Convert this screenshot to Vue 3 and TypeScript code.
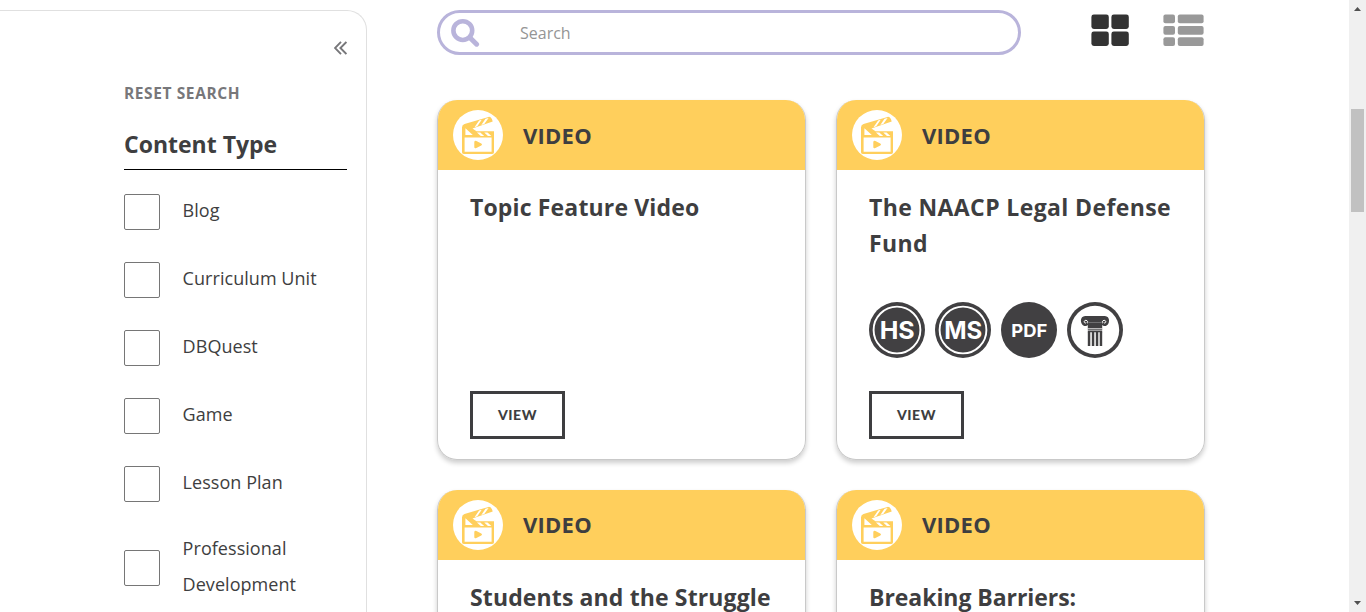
<script setup lang="ts">
interface Card {
  title: string
  tracking: number
  badges: string[]
}

const filters: string[] = [
  'Blog',
  'Curriculum Unit',
  'DBQuest',
  'Game',
  'Lesson Plan',
  'Professional Development',
]

const cards: Card[] = [
  { title: 'Topic Feature Video', tracking: 0.15, badges: [] },
  { title: 'The NAACP Legal Defense Fund', tracking: 0.38, badges: ['HS', 'MS', 'PDF', 'column'] },
  { title: 'Students and the Struggle', tracking: 0.13, badges: [] },
  { title: 'Breaking Barriers:', tracking: -0.05, badges: [] },
]
</script>

<template>
  <div class="page">
    <aside class="sidebar">
      <button class="collapse" aria-label="Collapse filters">
        <svg width="13" height="14" viewBox="0 0 13 14">
          <path d="M7 .9 1 7l6 6.1M12.4 .9 6.4 7l6 6.1" fill="none" stroke="#77777a" stroke-width="1.9" />
        </svg>
      </button>
      <a class="reset">RESET SEARCH</a>
      <h2 class="group-title"><span>Content Type</span></h2>
      <ul class="filters">
        <li v-for="name in filters" :key="name" class="filter">
          <span class="box"></span>
          <span class="label">{{ name }}</span>
        </li>
      </ul>
    </aside>

    <main class="content">
      <div class="toolbar">
        <div class="search">
          <svg width="30" height="30" viewBox="0 0 30 30">
            <circle cx="12.8" cy="12.6" r="9.4" fill="none" stroke="#b9b4db" stroke-width="4.6" />
            <path d="M20 19.8l6.6 6.4" stroke="#b9b4db" stroke-width="5" stroke-linecap="round" />
          </svg>
          <span class="placeholder">Search</span>
        </div>
        <svg class="grid-icon" width="38" height="33" viewBox="0 0 38 33" fill="#333">
          <rect x=".4" y=".5" width="17.4" height="14.5" rx="2.4" />
          <rect x="20.4" y=".5" width="17.4" height="14.5" rx="2.4" />
          <rect x=".4" y="17.5" width="17.4" height="14.5" rx="2.4" />
          <rect x="20.4" y="17.5" width="17.4" height="14.5" rx="2.4" />
        </svg>
        <svg class="list-icon" width="41" height="33" viewBox="0 0 41 33" fill="#999">
          <template v-for="y in [0.5, 12, 23.3]" :key="y">
            <rect x=".4" :y="y" width="11.6" height="8.7" rx="2" />
            <rect x="14.8" :y="y" width="25.8" height="8.7" rx="2" />
          </template>
        </svg>
      </div>

      <div class="cards">
        <article v-for="card in cards" :key="card.title" class="card">
          <header class="card-head">
            <svg width="50" height="50" viewBox="0 0 50 50">
              <circle cx="25" cy="25" r="25" fill="#fff" />
              <path d="M9 17.5Q9 14.6 11.5 13.9L35.5 6.9Q38.6 6.5 39.7 11.6L19.5 18.5 23.5 21.2H41V42.2Q41 44 39.2 44H10.8Q9 44 9 42.2Z" fill="#ffcf5c" />
              <path d="M12.4 18.3 19.8 25H12.4ZM11.6 27.4H38.6V41.7H11.6Z" fill="#fff" />
              <path d="M21.5 17.2 26.1 10.5 28.7 9.8 24.3 16.3ZM28.3 15 32.5 8.7 35.6 7.9 31.3 14ZM23.9 22.4H27.3L31.2 26.1H27.8ZM31.2 22.4H34.5L38.4 26.1H35Z" fill="#fff" />
              <path d="M21.3 32.3Q21.3 30 23.4 31.1L28.3 33.5Q29.8 34.6 28.3 35.6L23.4 38Q21.3 38.9 21.3 36.9Z" fill="#ffcf5c" />
            </svg>
            <span class="kind">VIDEO</span>
          </header>
          <div class="card-body">
            <h3 class="title" :style="{ letterSpacing: card.tracking + 'px' }">{{ card.title }}</h3>
            <div v-if="card.badges.length" class="badges">
              <svg v-for="badge in card.badges" :key="badge" width="56" height="56" viewBox="0 0 56 56">
                <circle cx="28" cy="28" r="28" fill="#414042" />
                <template v-if="badge === 'HS' || badge === 'MS'">
                  <circle cx="28" cy="28" r="23.4" fill="none" stroke="#fff" stroke-width="1.9" />
                  <text x="28.2" y="36.8" class="grade" :textLength="badge === 'HS' ? 35 : 38" lengthAdjust="spacingAndGlyphs">{{ badge }}</text>
                </template>
                <text v-else-if="badge === 'PDF'" x="28.3" y="34.6" class="format" textLength="36" lengthAdjust="spacingAndGlyphs">PDF</text>
                <template v-else>
                  <circle cx="28" cy="28" r="24.2" fill="#fff" />
                  <path d="M18.4 14H37.6C41.6 14.2 42.6 17.6 41.8 20.4 40.4 25.4 34 25.2 34.2 20.6H21.8C22 25.2 15.6 25.4 14.2 20.4 13.4 17.6 14.4 14.2 18.4 14Z" fill="#414042" />
                  <path d="M20.8 21.5C21.4 17.9 17.6 17.4 17.2 19.6 17.1 21.2 18.9 21.6 19.2 20.3M35.2 21.5C34.6 17.9 38.4 17.4 38.8 19.6 38.9 21.2 37.1 21.6 36.8 20.3" fill="none" stroke="#fff" stroke-width="1" />
                  <path d="M20.8 20.5H35.2V28.6H20.8ZM20.8 30H23.3V44H20.8ZM24.8 30H27.3V44H24.8ZM28.8 30H31.3V44H28.8ZM32.7 30H35.2V44H32.7Z" fill="#414042" />
                  <path d="M20.6 26.8H35.4" stroke="#fff" stroke-width=".9" />
                  <path d="M20.8 29.7H35.2" stroke="#414042" stroke-width="1.2" />
                </template>
              </svg>
            </div>
            <a class="view">VIEW</a>
          </div>
        </article>
      </div>
    </main>

    <div class="scrollbar">
      <svg width="7" height="4" viewBox="0 0 7 4"><path d="M3.5 0 7 4H0Z" fill="#505050" /></svg>
      <div class="thumb"></div>
      <svg width="7" height="4" viewBox="0 0 7 4"><path d="M0 0H7L3.5 4Z" fill="#505050" /></svg>
    </div>
  </div>
</template>

<style>
body {
  margin: 0;
  overflow: hidden;
}
</style>

<style scoped>
.page {
  box-sizing: border-box;
  width: 1366px;
  height: 612px;
  overflow: hidden;
  display: flex;
  background: #fff;
  color: #3e3e40;
  font-family: "Open Sans", "Noto Sans", sans-serif;
}
svg {
  display: block;
  flex: none;
}
.sidebar {
  box-sizing: border-box;
  flex: none;
  width: 367px;
  height: 700px;
  margin-top: 10px;
  padding: 30px 19px 0 124px;
  border: 1px solid #e0e0e0;
  border-left: 0;
  border-bottom: 0;
  border-top-right-radius: 20px;
}
.collapse {
  display: block;
  margin: 0 0 0 auto;
  padding: 0;
  border: 0;
  background: none;
}
.reset {
  display: block;
  margin-top: 26px;
  height: 24px;
  line-height: 24px;
  font-size: 15.5px;
  font-weight: 700;
  letter-spacing: 0.6px;
  color: #77777a;
}
.group-title {
  margin: 21px 0 24px;
  height: 43px;
  line-height: 36px;
  border-bottom: 1px solid #000;
  font-size: 23px;
  font-weight: 700;
  letter-spacing: 0;
}
.filters {
  list-style: none;
  margin: 0;
  padding: 0;
  display: flex;
  flex-direction: column;
  gap: 32px;
}
.filter {
  display: flex;
  align-items: center;
  gap: 22.6px;
}
.filter:last-child {
  margin-top: -2px;
}
.box {
  box-sizing: border-box;
  flex: none;
  width: 36px;
  height: 36px;
  border: 1px solid #767676;
  border-radius: 2px;
}
.label {
  font-size: 18px;
  line-height: 36px;
  letter-spacing: 0.05px;
  margin-top: -2px;
  margin-bottom: 2px;
}
.content {
  flex: none;
  width: 768px;
  margin-left: 70px;
  padding-top: 10px;
}
.toolbar {
  display: flex;
  align-items: flex-start;
  height: 90px;
}
.search {
  box-sizing: border-box;
  width: 584px;
  height: 45px;
  border: 3px solid #b9b4db;
  border-radius: 23px;
  display: flex;
  align-items: center;
  padding-left: 10px;
}
.placeholder {
  margin-left: 40px;
  font-size: 16px;
  color: #959595;
}
.grid-icon {
  margin: 4px 0 0 70px;
}
.list-icon {
  margin: 4px 0 0 34px;
}
.cards {
  display: grid;
  grid-template-columns: 369px 369px;
  gap: 30px;
}
.card {
  box-sizing: border-box;
  height: 360px;
  border: 1px solid #c9c9c9;
  border-top: 0;
  border-radius: 20px;
  overflow: hidden;
  box-shadow: 0 3px 5px rgba(0, 0, 0, 0.2);
  display: flex;
  flex-direction: column;
}
.card-head {
  flex: none;
  height: 70px;
  padding-left: 15px;
  background: #ffcf5c;
  display: flex;
  align-items: center;
  gap: 20px;
}
.kind {
  font-size: 22px;
  font-weight: 700;
  letter-spacing: 0.25px;
}
.card:nth-child(n + 3) .kind {
  margin-bottom: 2px;
}
.card-body {
  flex: 1;
  padding: 19px 20px 20px 32px;
  display: flex;
  flex-direction: column;
  align-items: flex-start;
}
.title {
  margin: 0;
  font-size: 23px;
  line-height: 36px;
  font-weight: 700;
}
.badges {
  display: flex;
  gap: 10px;
  margin-top: 41px;
}
.grade,
.format {
  fill: #fff;
  font-family: Inter, sans-serif;
  font-weight: 700;
  text-anchor: middle;
}
.grade {
  font-size: 24px;
}
.format {
  font-size: 18px;
}
.view {
  box-sizing: border-box;
  width: 95px;
  height: 48px;
  margin-top: auto;
  padding: 0 0 2px;
  border: 3px solid #3e3e40;
  display: flex;
  align-items: center;
  justify-content: center;
  font-family: Lato, sans-serif;
  font-size: 14px;
  font-weight: 900;
  letter-spacing: 0.5px;
}
.scrollbar {
  box-sizing: border-box;
  flex: none;
  width: 17px;
  height: 612px;
  margin-left: auto;
  padding: 7px 2px 7px 2px;
  background: #f0f0f0;
  display: flex;
  flex-direction: column;
  align-items: center;
}
.thumb {
  width: 13px;
  height: 103px;
  margin: 98px 0 auto;
  background: #c1c1c1;
}
</style>
